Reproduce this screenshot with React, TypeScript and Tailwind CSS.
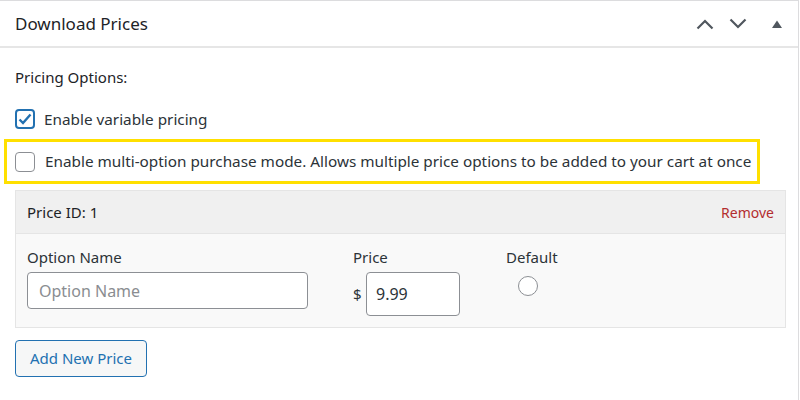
import React from "react";

export default function App() {
  return (
    <div className="w-[800px] h-[400px] bg-white overflow-hidden text-[#1d2327]" style={{ fontFamily: '"Noto Sans", "Open Sans", sans-serif' }}>
      <div className="w-[799px] h-[400px] border-t border-r border-[#dcdcde]">
        <div className="h-[47px] flex items-center justify-between border-b-2 border-[#e6e6e6] pl-[15px] pr-[16px]">
          <h2 className="text-[17px] leading-none">Download Prices</h2>
          <div className="flex items-center">
            <svg width="18" height="12" viewBox="0 0 18 12" className="mr-[15px]">
              <path d="M1.5 10.5 L9 3 L16.5 10.5" fill="none" stroke="#50575e" strokeWidth="2.2" />
            </svg>
            <svg width="18" height="12" viewBox="0 0 18 12" className="mr-[25px]">
              <path d="M1.5 1.5 L9 9 L16.5 1.5" fill="none" stroke="#50575e" strokeWidth="2.2" />
            </svg>
            <svg width="10" height="8" viewBox="0 0 10 8">
              <path d="M0 8 L5 0.5 L10 8 Z" fill="#50575e" />
            </svg>
          </div>
        </div>
        <div className="pl-[15px] pt-[18px] text-[15px] leading-[22px]">Pricing Options:</div>
        <label className="flex items-center mt-[20px] ml-[15px] h-[22px]">
          <span className="w-[20px] h-[20px] border-2 border-[#2271b1] rounded-[4px] flex items-center justify-center">
            <svg width="14" height="12" viewBox="0 0 14 12">
              <path d="M1.5 6.5 L5 10 L12.5 1.5" fill="none" stroke="#2271b1" strokeWidth="2.4" />
            </svg>
          </span>
          <span className="ml-[9px] text-[15.3px] text-[#2c3338]">Enable variable pricing</span>
        </label>
        <div className="mt-[9px] ml-[4px] w-[756px] h-[45px] border-[3px] border-[#ffe000] flex items-center pl-[8px]">
          <span className="w-[20px] h-[20px] border border-[#8c8f94] rounded-[4px] bg-white"></span>
          <span className="ml-[10px] text-[15.3px] text-[#2c3338] whitespace-nowrap">Enable multi-option purchase mode. Allows multiple price options to be added to your cart at once</span>
        </div>
        <div className="mt-[6px] ml-[15px] w-[771px] h-[138px] border border-[#e5e5e5] bg-[#f9f9f9]">
          <div className="h-[43px] bg-[#f0f0f0] border-b border-[#e5e5e5] flex items-center justify-between pl-[11px] pr-[11px]">
            <span className="text-[15px] text-[#1d2327]">Price ID: 1</span>
            <span className="text-[14px] text-[#b32d2e]">Remove</span>
          </div>
          <div className="flex pl-[11px] pt-[12px]">
            <div className="w-[281px]">
              <div className="text-[15px] leading-[22px] text-[#2c3338]">Option Name</div>
              <div className="mt-[4px] h-[37px] border border-[#8c8f94] rounded-[4px] bg-white flex items-center pl-[11px] text-[16px] text-[#8a8d91]">Option Name</div>
            </div>
            <div className="ml-[45px] w-[107px]">
              <div className="text-[15px] leading-[22px] text-[#2c3338]">Price</div>
              <div className="flex items-center mt-[4px]">
                <span className="text-[15px] text-[#2c3338] w-[13px]">$</span>
                <div className="w-[94px] h-[44px] border border-[#8c8f94] rounded-[4px] bg-white flex items-center pl-[9px] text-[16px] text-[#2c3338]">9.99</div>
              </div>
            </div>
            <div className="ml-[46px]">
              <div className="text-[15px] leading-[22px] text-[#2c3338]">Default</div>
              <div className="mt-[8px] ml-[12px] w-[20px] h-[20px] rounded-full border border-[#8c8f94] bg-white"></div>
            </div>
          </div>
        </div>
        <button className="mt-[12px] ml-[15px] w-[132px] h-[37px] border border-[#2271b1] rounded-[4px] bg-[#f6f7f7] text-[#2271b1] text-[15px] flex items-center justify-center">Add New Price</button>
      </div>
    </div>
  );
}
